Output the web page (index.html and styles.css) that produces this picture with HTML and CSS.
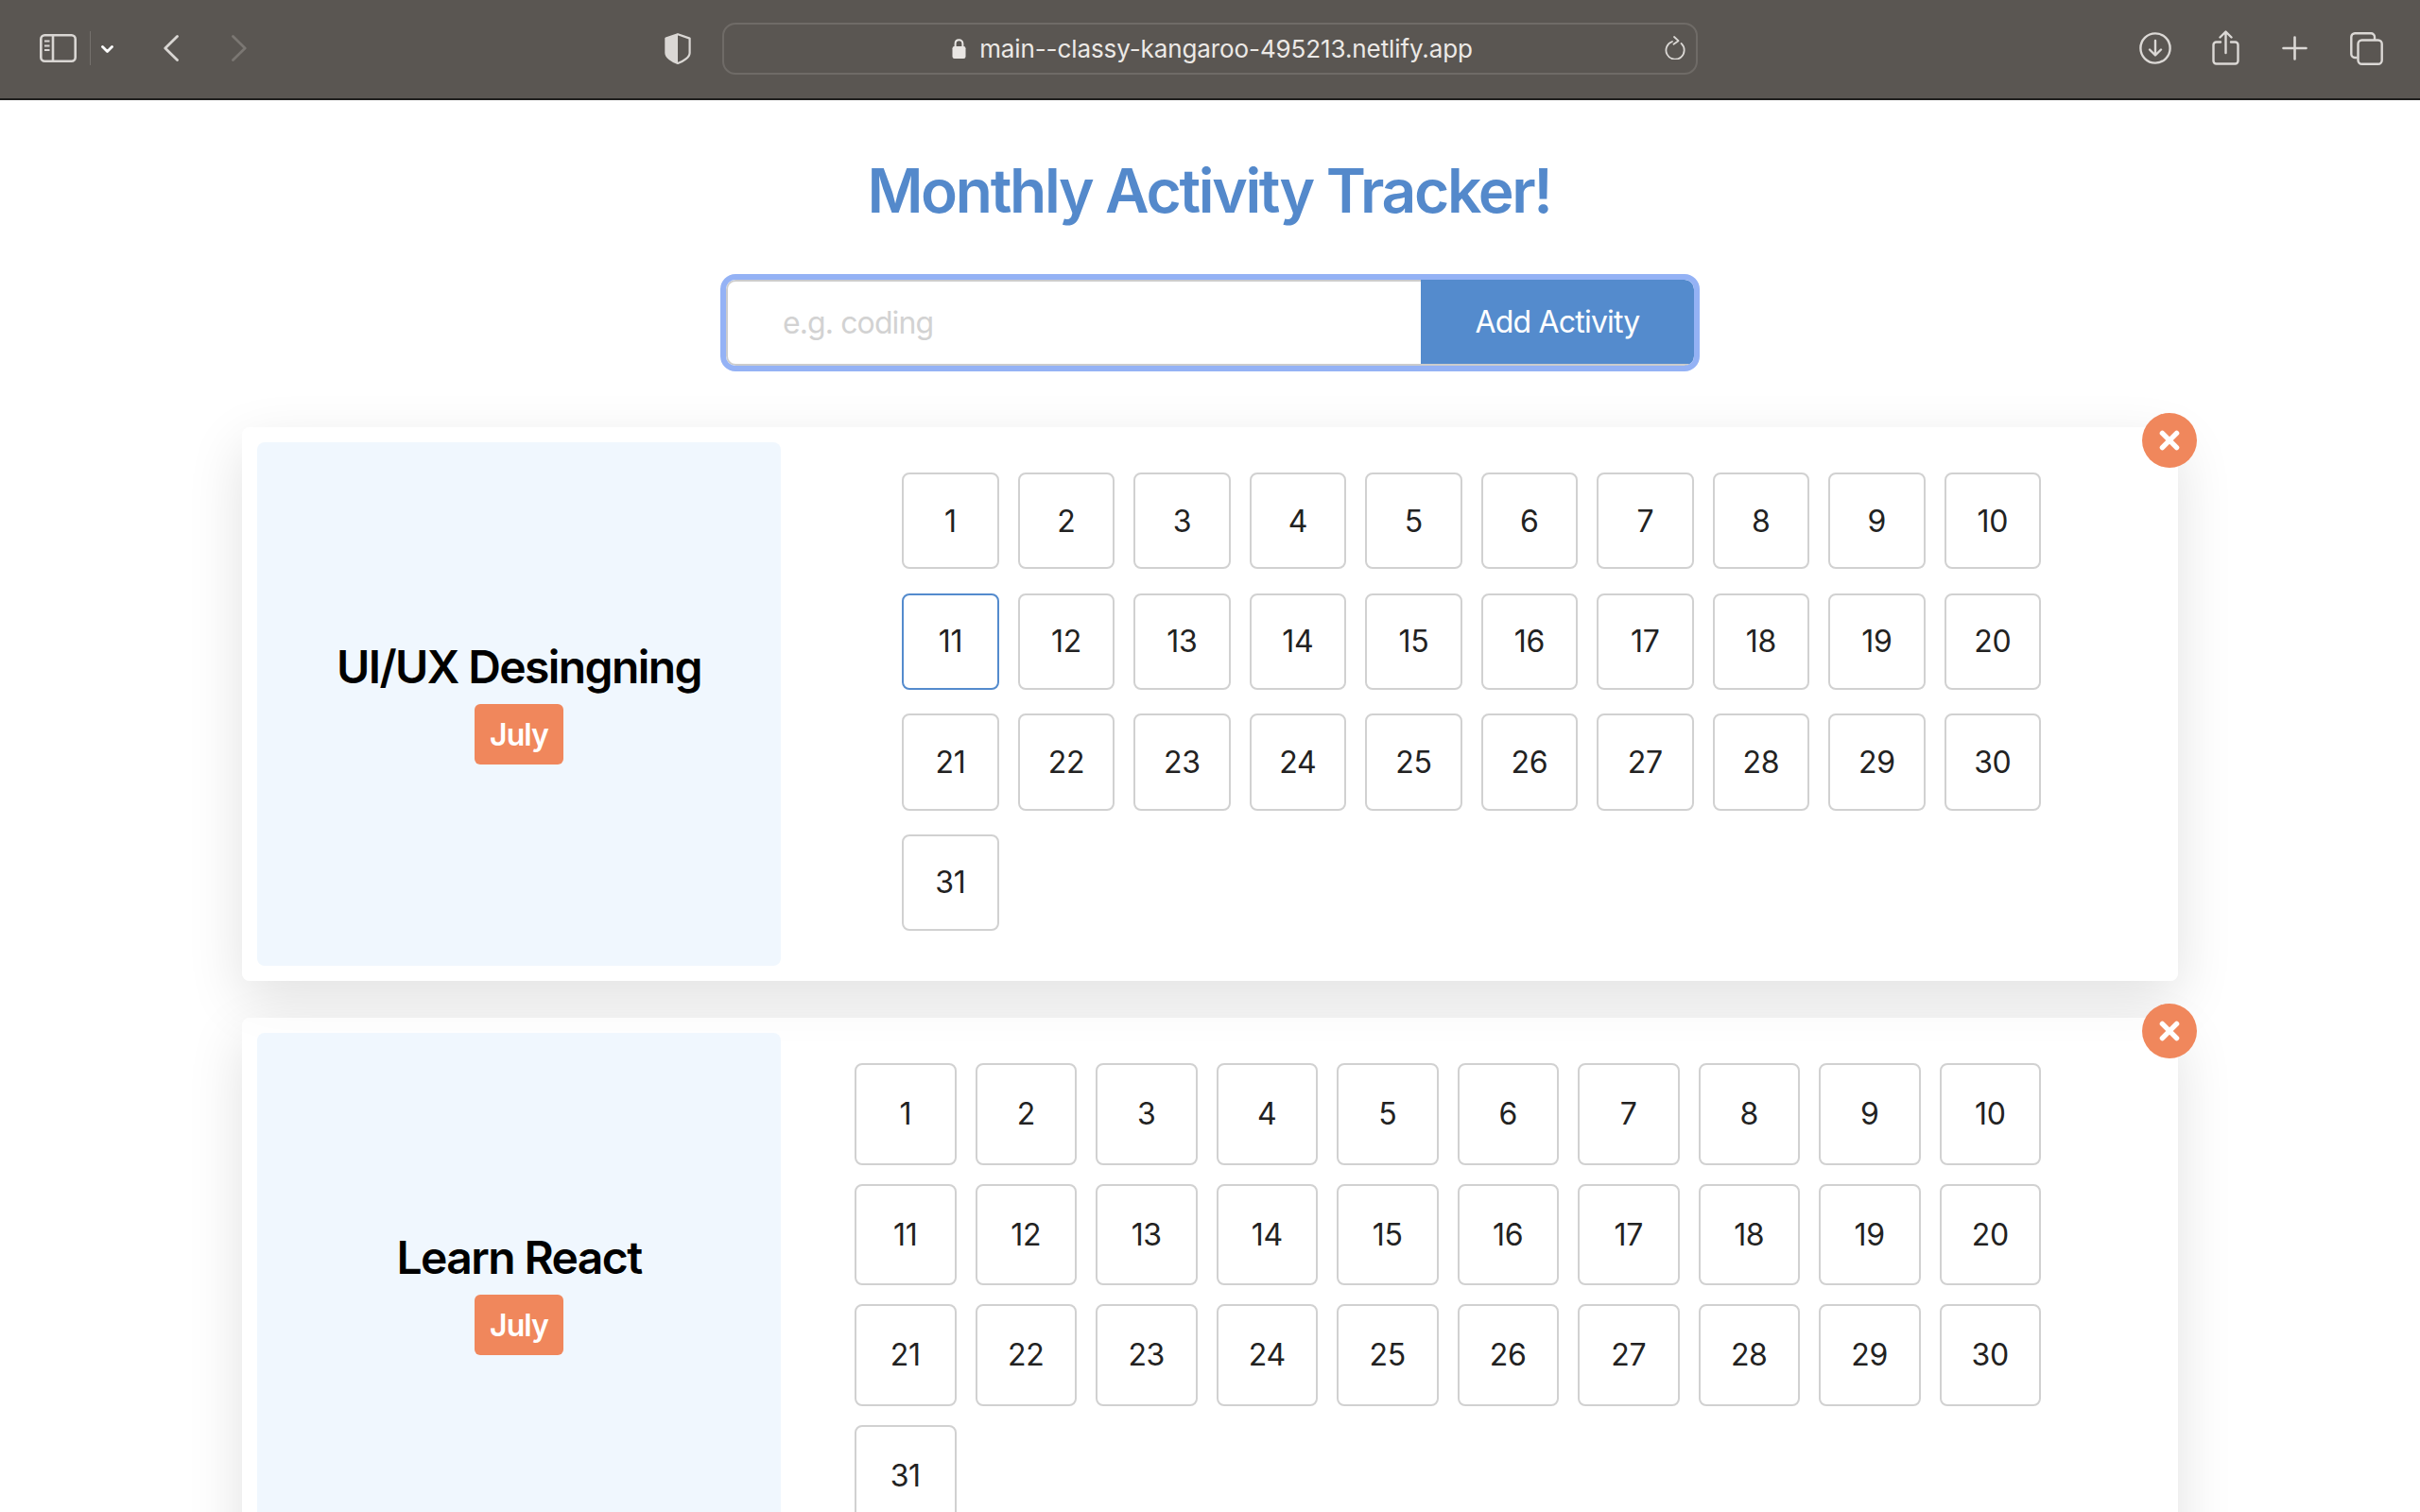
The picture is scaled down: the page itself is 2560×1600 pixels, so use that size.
FILE: index.html
```html
<!DOCTYPE html>
<html lang="en">
<head>
<meta charset="utf-8">
<title>Monthly Activity Tracker!</title>
<link rel="stylesheet" href="styles.css">
</head>
<body>
<header class="toolbar">
  <svg class="ic-sidebar" viewBox="0 0 39 30" fill="none" stroke="#d9d6d3" stroke-width="2.6"><rect x="1.3" y="1.3" width="36.4" height="27.4" rx="4"/><path d="M14 1.5V28.5"/><path d="M5 7.5H10.5M5 12.5H10.5M5 17H10.5" stroke-width="2"/></svg>
  <span class="sep"></span>
  <svg class="ic-chev" viewBox="0 0 13 8" fill="none" stroke="#fff" stroke-width="2.8" stroke-linecap="round" stroke-linejoin="round"><path d="M1.5 1.5L6.5 6.5L11.5 1.5"/></svg>
  <svg class="ic-back" viewBox="0 0 16 28" fill="none" stroke="#d9d6d3" stroke-width="2.8" stroke-linecap="round" stroke-linejoin="round"><path d="M14.5 1.5L1.8 14L14.5 26.5"/></svg>
  <svg class="ic-forward" viewBox="0 0 16 28" fill="none" stroke="#7b7773" stroke-width="2.8" stroke-linecap="round" stroke-linejoin="round"><path d="M1.5 1.5L14.2 14L1.5 26.5"/></svg>
  <svg class="ic-shield" viewBox="0 0 28 33" fill="none"><path d="M14 1.2L26.6 5.6V21C26.6 25.5 20 30 14 32C8 30 1.4 25.5 1.4 21V5.6Z" stroke="#dbd8d5" stroke-width="2.2" stroke-linejoin="round"/><path d="M14 1.2L1.4 5.6V21C1.4 25.5 8 30 14 32Z" fill="#dbd8d5"/></svg>
  <div class="address">
    <span class="url">
      <svg class="ic-lock" viewBox="0 0 15 22" fill="none"><path d="M3.6 10V6.2C3.6 1 11.4 1 11.4 6.2V10" stroke="#e9e6e3" stroke-width="2"/><rect x="0.5" y="9" width="14" height="13" rx="2.2" fill="#e9e6e3"/></svg>
      main--classy-kangaroo-495213.netlify.app
    </span>
    <svg class="ic-reload" viewBox="0 0 22 25" fill="none" stroke="#dbd8d5" stroke-width="1.8" stroke-linecap="round" stroke-linejoin="round"><path d="M8 6A9.6 9.6 0 1 0 17.5 8"/><path d="M10 1L14.5 5.2L9.5 8.8"/></svg>
  </div>
  <svg class="ic-download" viewBox="0 0 34 34" fill="none" stroke="#dbd8d5" stroke-width="2.4" stroke-linecap="round" stroke-linejoin="round"><circle cx="17" cy="17" r="15.6"/><path d="M17 9V24M11 18.5L17 24.5L23 18.5"/></svg>
  <svg class="ic-share" viewBox="0 0 29 37" fill="none" stroke="#dbd8d5" stroke-width="2.4" stroke-linecap="round" stroke-linejoin="round"><path d="M9 12.5H4.5A3 3 0 0 0 1.5 15.5V32.5A3 3 0 0 0 4.5 35.5H24.5A3 3 0 0 0 27.5 32.5V15.5A3 3 0 0 0 24.5 12.5H20"/><path d="M14.5 24V2M8.5 7.5L14.5 1.5L20.5 7.5"/></svg>
  <svg class="ic-plus" viewBox="0 0 27 26" fill="none" stroke="#dbd8d5" stroke-width="2.6" stroke-linecap="round"><path d="M13.5 1.5V24.5M1.5 13H25.5"/></svg>
  <svg class="ic-tabs" viewBox="0 0 35 35" fill="none" stroke="#dbd8d5" stroke-width="2.4" stroke-linejoin="round"><path d="M7.5 27H5A3.8 3.8 0 0 1 1.3 23V5A3.8 3.8 0 0 1 5 1.3H22A3.8 3.8 0 0 1 26 5V8"/><rect x="8.5" y="8.5" width="25.2" height="25.2" rx="4"/></svg>
</header>

<main class="page">
  <h1 class="title">Monthly Activity Tracker!</h1>
  <form class="add-form">
    <input class="add-input" type="text" placeholder="e.g. coding">
    <button class="add-btn" type="button">Add Activity</button>
  </form>

  <section class="card">
    <div class="panel">
      <h2 class="panel-title">UI/UX Desingning</h2>
      <span class="badge">July</span>
    </div>
    <div class="days days-small">
      <button class="day" type="button">1</button><button class="day" type="button">2</button><button class="day" type="button">3</button><button class="day" type="button">4</button><button class="day" type="button">5</button><button class="day" type="button">6</button><button class="day" type="button">7</button><button class="day" type="button">8</button><button class="day" type="button">9</button><button class="day" type="button">10</button>
      <button class="day day-focus" type="button">11</button><button class="day" type="button">12</button><button class="day" type="button">13</button><button class="day" type="button">14</button><button class="day" type="button">15</button><button class="day" type="button">16</button><button class="day" type="button">17</button><button class="day" type="button">18</button><button class="day" type="button">19</button><button class="day" type="button">20</button>
      <button class="day" type="button">21</button><button class="day" type="button">22</button><button class="day" type="button">23</button><button class="day" type="button">24</button><button class="day" type="button">25</button><button class="day" type="button">26</button><button class="day" type="button">27</button><button class="day" type="button">28</button><button class="day" type="button">29</button><button class="day" type="button">30</button>
      <button class="day" type="button">31</button>
    </div>
    <button class="close" type="button" aria-label="Remove"><svg class="ic-x" viewBox="0 0 22 22" fill="none" stroke="#fff" stroke-width="5.4" stroke-linecap="round"><path d="M3.4 3.4L18.6 18.6M18.6 3.4L3.4 18.6"/></svg></button>
  </section>

  <section class="card">
    <div class="panel">
      <h2 class="panel-title">Learn React</h2>
      <span class="badge">July</span>
    </div>
    <div class="days days-large">
      <button class="day" type="button">1</button><button class="day" type="button">2</button><button class="day" type="button">3</button><button class="day" type="button">4</button><button class="day" type="button">5</button><button class="day" type="button">6</button><button class="day" type="button">7</button><button class="day" type="button">8</button><button class="day" type="button">9</button><button class="day" type="button">10</button>
      <button class="day" type="button">11</button><button class="day" type="button">12</button><button class="day" type="button">13</button><button class="day" type="button">14</button><button class="day" type="button">15</button><button class="day" type="button">16</button><button class="day" type="button">17</button><button class="day" type="button">18</button><button class="day" type="button">19</button><button class="day" type="button">20</button>
      <button class="day" type="button">21</button><button class="day" type="button">22</button><button class="day" type="button">23</button><button class="day" type="button">24</button><button class="day" type="button">25</button><button class="day" type="button">26</button><button class="day" type="button">27</button><button class="day" type="button">28</button><button class="day" type="button">29</button><button class="day" type="button">30</button>
      <button class="day" type="button">31</button>
    </div>
    <button class="close" type="button" aria-label="Remove"><svg class="ic-x" viewBox="0 0 22 22" fill="none" stroke="#fff" stroke-width="5.4" stroke-linecap="round"><path d="M3.4 3.4L18.6 18.6M18.6 3.4L3.4 18.6"/></svg></button>
  </section>
</main>
</body>
</html>
```

FILE: styles.css
```css
* { box-sizing: border-box; }

html, body {
  margin: 0;
  height: 1600px;
  overflow: hidden;
  background: #fff;
  font-family: Inter, "Liberation Sans", sans-serif;
}

/* Browser chrome */
.toolbar {
  display: flex;
  align-items: center;
  height: 106px;
  padding: 0 0 2px 42px;
  background: #5a5652;
  border-bottom: 2px solid #1f1e1d;
}
.toolbar svg { display: block; flex: none; }
.ic-sidebar { width: 39px; height: 30px; }
.sep { width: 1px; height: 36px; margin-left: 14px; background: #75716d; flex: none; }
.ic-chev { width: 13px; height: 8px; margin-left: 11px; margin-top: 2px; }
.ic-back { width: 16px; height: 28px; margin-left: 53px; }
.ic-forward { width: 16px; height: 28px; margin-left: 56px; }
.ic-shield { width: 28px; height: 33px; margin-left: 442px; }
.address {
  position: relative;
  display: flex;
  align-items: center;
  justify-content: center;
  width: 1032px;
  height: 55px;
  margin-left: 33px;
  padding-left: 5px;
  border: 2px solid #6f6b67;
  border-radius: 14px;
}
.url {
  display: flex;
  align-items: center;
  gap: 14px;
  font-size: 26px;
  letter-spacing: -0.1px;
  color: #ece9e6;
  white-space: nowrap;
}
.ic-lock { width: 15px; height: 22px; }
.ic-reload { position: absolute; right: 11px; top: 12px; width: 22px; height: 25px; }
.ic-download { width: 34px; height: 34px; margin-left: 467px; }
.ic-share { width: 29px; height: 37px; margin-left: 43px; margin-top: -2px; }
.ic-plus { width: 27px; height: 26px; margin-left: 45px; }
.ic-tabs { width: 35px; height: 35px; margin-left: 45px; }

/* Page */
.page { display: flex; flex-direction: column; align-items: center; }

.title {
  margin: 57px 2px 0 0;
  font-size: 64px;
  line-height: 78px;
  font-weight: 600;
  color: #5489cb;
  letter-spacing: -2.3px;
}

.add-form {
  display: flex;
  width: 1024px;
  height: 91px;
  margin-top: 55px;
  border-radius: 10px;
  outline: 6px solid #94b2f5;
  overflow: hidden;
}
.add-input {
  flex: 1;
  min-width: 0;
  padding: 0 0 0 58px;
  border: 2px solid #ccc;
  border-right: 0;
  border-radius: 10px 0 0 10px;
  outline: 0;
  font: 400 32px Inter, sans-serif;
  letter-spacing: -0.9px;
  color: #222;
  background: #fff;
}
.add-input::placeholder { color: #d2d2d2; opacity: 1; }
.add-btn {
  width: 289px;
  height: 91px;
  border: 0;
  border-bottom: 2px solid #ccc;
  background: #548bcd;
  color: #fff;
  font: 400 32px Inter, sans-serif;
  letter-spacing: -0.8px;
}

/* Activity cards */
.card {
  position: relative;
  display: flex;
  flex: none;
  width: 2048px;
  height: 586px;
  margin-top: 65px;
  padding: 16px;
  border-radius: 8px;
  background: rgba(255, 255, 255, 0.6);
  box-shadow: 0 20px 60px rgba(0, 0, 0, 0.12);
}
.card + .card { margin-top: 39px; }

.panel {
  display: flex;
  flex-direction: column;
  align-items: center;
  justify-content: center;
  flex: none;
  width: 554px;
  height: 554px;
  border-radius: 8px;
  background: #f0f7fe;
}
.panel-title {
  margin: 0 0 14px;
  font-size: 48px;
  line-height: 50px;
  font-weight: 600;
  color: #000;
  letter-spacing: -1.6px;
}
.badge {
  display: flex;
  align-items: center;
  height: 64px;
  padding: 0 16px;
  border-radius: 6px;
  background: #f0875c;
  color: #fff;
  font-size: 32px;
  font-weight: 600;
  letter-spacing: -0.9px;
}

.days {
  display: grid;
  align-content: start;
  margin: 32px 129px 0 auto;
}
.days-small {
  grid-template-columns: repeat(10, 102.4px);
  grid-auto-rows: 102.4px;
  gap: 25.2px 20.1px;
}
.days-large {
  grid-template-columns: repeat(10, 107.5px);
  grid-auto-rows: 107.5px;
  gap: 20px;
}
.day {
  padding: 0;
  border: 2px solid #d1d1d1;
  border-radius: 8px;
  background: #fff;
  color: #222;
  font: 400 32px Inter, sans-serif;
  letter-spacing: -0.3px;
}
.day-focus { border-color: #548bcd; }

.close {
  position: absolute;
  top: -15px;
  right: -20px;
  display: flex;
  align-items: center;
  justify-content: center;
  width: 58px;
  height: 58px;
  padding: 0;
  border: 0;
  border-radius: 50%;
  background: #f0875c;
}
.ic-x { width: 22px; height: 22px; }
```
